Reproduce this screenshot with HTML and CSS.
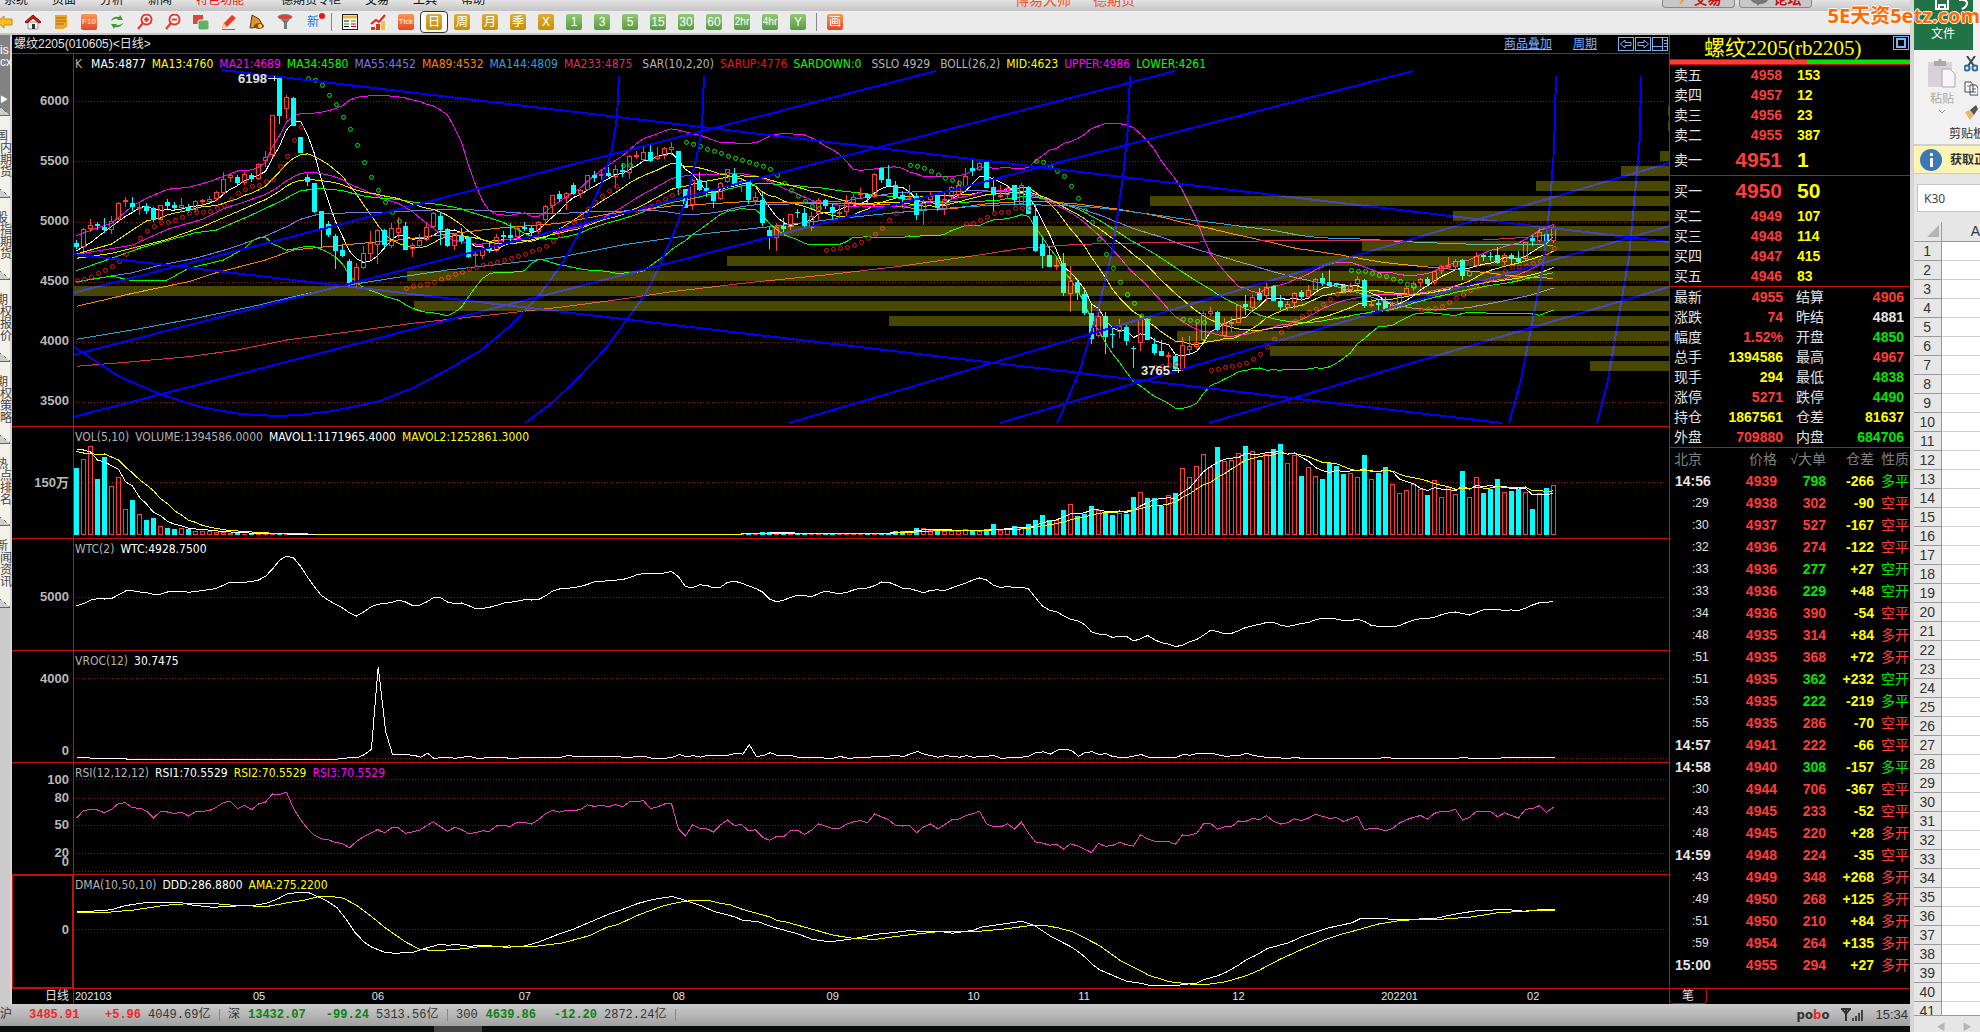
FILE: index.html
```html
<!DOCTYPE html>
<html lang="zh-CN">
<head>
<meta charset="utf-8">
<title>螺纹2205 日线</title>
<link rel="stylesheet" href="styles.css">
</head>
<body>
<div class="desktop">
<div class="terminal">
  <header class="menubar">
    <nav class="menu">
      <a href="#">系统</a><a href="#">页面</a><a href="#">分析</a><a href="#">新闻</a><a href="#" class="hot">特色功能</a><a href="#" class="wide">德期货专柜</a><a href="#">交易</a><a href="#">工具</a><a href="#">帮助</a>
    </nav>
    <div class="brand"><span>博易大师</span><span>德期货</span></div>
    <div class="capsules">
      <button><svg width="12" height="14" viewBox="0 0 12 14"><path d="M8 0 2 7h4L3 14l8-9H7l3-5z" fill="#f90"/></svg>交易</button>
      <button><svg width="18" height="14" viewBox="0 0 18 14"><path d="M0 3h18v5q-2 4-8 4l-3 2v-2Q2 11 0 7z" fill="#777"/></svg>论坛</button>
    </div>
  </header>
  <div class="toolbar">
    <button aria-label="后退"><svg viewBox="0 0 16 16"><path d="M0 8 7 2v3h8v6H7v3z" fill="#fdbb28" stroke="#c98a10"/></svg></button>
    <button aria-label="首页"><svg viewBox="0 0 16 16"><path d="M3 8h10v7H3z" fill="#eee" stroke="#999"/><path d="M7 10h3v5H7z" fill="#333"/><path d="M0 8 8 1l8 7-2 1-6-5-6 5z" fill="#d01818" stroke="#900"/></svg></button>
    <button aria-label="便笺"><svg viewBox="0 0 16 16"><path d="M2 1h12v12l-4 2H2z" fill="#eea52c"/><path d="M3 4h10M3 7h10M3 10h8" stroke="#a96a10"/></svg></button>
    <button class="chip orange" aria-label="F10"><span>F10</span></button>
    <button aria-label="刷新"><svg viewBox="0 0 16 16"><path d="M2 7q2-5 8-4l1-2 3 5H8l1-1Q6 4 2 7zM14 9q-2 5-8 4l-1 2-3-5h6l-1 1q3 1 7-2z" fill="#3d9e2c"/></svg></button>
    <button aria-label="放大"><svg viewBox="0 0 16 16"><circle cx="9.500" cy="5.500" r="5" fill="#fff" stroke="#e8352a" stroke-width="2"/><path d="M7 5.500h5M9.500 3v5M6 9l-5 6" stroke="#e8352a" stroke-width="2"/></svg></button>
    <button aria-label="缩小"><svg viewBox="0 0 16 16"><circle cx="9.500" cy="5.500" r="5" fill="#fff" stroke="#e8352a" stroke-width="2"/><path d="M7 5.500h5M6 9l-5 6" stroke="#e8352a" stroke-width="2"/></svg></button>
    <button aria-label="叠加"><svg viewBox="0 0 16 16"><rect x="0" y="1" width="10" height="9" fill="#d8463c"/><rect x="5" y="6" width="11" height="10" rx="2" fill="#62b060" stroke="#eee"/></svg></button>
    <button aria-label="画笔"><svg viewBox="0 0 16 16"><path d="M1 14 3 9 11 1l4 3-9 9z" fill="#e8402a"/><path d="m1 14 2-5 3 4z" fill="#fc8"/><path d="M1 15.500h13" stroke="#e8402a"/></svg></button>
    <button aria-label="预警"><svg viewBox="0 0 16 16"><path d="m3 1 7 4 3 5-1 3L1 14l1-6z" fill="#dc962e" stroke="#5d3512"/><ellipse cx="10" cy="12" rx="5" ry="3" fill="#8a4a12"/><circle cx="11" cy="12" r="2" fill="#fc5"/></svg></button>
    <button aria-label="筛选"><svg viewBox="0 0 16 16"><path d="m1 2 6 7v6h3V9l5-7z" fill="#777"/><ellipse cx="8" cy="3" rx="7" ry="2.500" fill="#e03a3a" stroke="#888"/></svg></button>
    <button class="newmark" aria-label="新"><span>新</span><svg viewBox="0 0 6 6"><circle cx="3" cy="3" r="3" fill="#f01010"/></svg></button>
    <i class="sep"></i>
    <button aria-label="报价表"><svg viewBox="0 0 16 16"><rect x=".5" y=".5" width="15" height="15" fill="#fff" stroke="#222"/><path d="M1 3h14" stroke="#e4b848" stroke-width="3"/><path d="M2 7h5M2 12.500h5" stroke="#111"/><path d="M2 10h5M9 7h5" stroke="#0a0"/><path d="M9 10h5M9 12.500h5" stroke="#d00"/></svg></button>
    <button aria-label="走势图"><svg viewBox="0 0 16 16"><path d="M1 13h4v3H1zM6 10h4v6H6z" fill="#e03020"/><path d="M11 7h4v9h-4z" fill="#f0c040"/><path d="m1 10 5-4 3 2 6-7" fill="none" stroke="#e02018" stroke-width="2"/></svg></button>
    <button class="chip red"><span>Tick</span></button>
    <button class="chip gold on"><span>日</span></button>
    <button class="chip gold"><span>周</span></button>
    <button class="chip gold"><span>月</span></button>
    <button class="chip gold"><span>季</span></button>
    <button class="chip gold"><span>X</span></button>
    <button class="chip green"><span>1</span></button>
    <button class="chip green"><span>3</span></button>
    <button class="chip green"><span>5</span></button>
    <button class="chip green"><span>15</span></button>
    <button class="chip green"><span>30</span></button>
    <button class="chip green"><span>60</span></button>
    <button class="chip green small"><span>2hr</span></button>
    <button class="chip green small"><span>4hr</span></button>
    <button class="chip green"><span>Y</span></button>
    <i class="sep"></i>
    <button class="chip red"><span>画</span></button>
  </div>
  <div class="work">
    <nav class="sidetabs">
      <a href="#" class="on">is<br>cx<b>▶</b></a>
      <a href="#">国内期货</a><a href="#">股指期货</a><a href="#">期权报价</a><a href="#">期权策略</a><a href="#">热点排名</a><a href="#">新闻资讯</a>
    </nav>
    <main class="chart">
      <div class="charthead">
        <h1>螺纹2205(010605)&lt;日线&gt;</h1>
        <a href="#" class="over">商品叠加</a><a href="#" class="cycle">周期</a>
        <button aria-label="上一个"><svg viewBox="0 0 16 14"><rect x=".5" y=".5" width="15" height="13"/><path d="M2.500 7 7 3v2.500h6v3H7V11z"/></svg></button>
        <button aria-label="下一个"><svg viewBox="0 0 16 14"><rect x=".5" y=".5" width="15" height="13"/><path d="M13.500 7 9 3v2.500H3v3h6V11z"/></svg></button>
        <button aria-label="布局"><svg viewBox="0 0 16 14"><rect x=".5" y=".5" width="15" height="13"/><path d="M10.500 1v12M1 9.500h9M12 3.500h3M12 6.500h3M12 9.500h3"/></svg></button>
      </div>
      <section class="pane">
        <div class="axis price"><span>6000</span><span>5500</span><span>5000</span><span>4500</span><span>4000</span><span>3500</span></div>
        <div class="plot">
          <svg id="kline" viewBox="74 54 1595 372" preserveAspectRatio="none"></svg>
          <p class="legend"><span class="dim k">K</span><span class="w">MA5:4877</span><span class="y">MA13:4760</span><span class="m">MA21:4689</span><span class="g">MA34:4580</span><span class="v">MA55:4452</span><span class="o">MA89:4532</span><span class="b">MA144:4809</span><span class="c">MA233:4875</span><span class="dim set">SAR(10,2,20)</span><span class="r">SARUP:4776</span><span class="g">SARDOWN:0</span><span class="dim set">SSLO 4929</span><span class="dim set">BOLL(26,2)</span><span class="y">MID:4623</span><span class="m">UPPER:4986</span><span class="g">LOWER:4261</span></p>
        </div>
      </section>
      <section class="pane">
        <div class="axis vol"><span>150万</span></div>
        <div class="plot">
          <svg id="volume" viewBox="74 427 1595 111" preserveAspectRatio="none"></svg>
          <p class="legend"><span class="dim">VOL(5,10)</span><span class="dim">VOLUME:1394586.0000</span><span class="w">MAVOL1:1171965.4000</span><span class="y">MAVOL2:1252861.3000</span></p>
        </div>
      </section>
      <section class="pane">
        <div class="axis wtc"><span>5000</span></div>
        <div class="plot">
          <svg id="wtc" viewBox="74 539 1595 111" preserveAspectRatio="none"></svg>
          <p class="legend"><span class="dim">WTC(2)</span><span class="w">WTC:4928.7500</span></p>
        </div>
      </section>
      <section class="pane">
        <div class="axis vroc"><span>4000</span><span>0</span></div>
        <div class="plot">
          <svg id="vroc" viewBox="74 651 1595 111" preserveAspectRatio="none"></svg>
          <p class="legend"><span class="dim">VROC(12)</span><span class="w">30.7475</span></p>
        </div>
      </section>
      <section class="pane">
        <div class="axis rsi"><span>100</span><span>80</span><span>50</span><span>20</span><span>0</span></div>
        <div class="plot">
          <svg id="rsi" viewBox="74 763 1595 111" preserveAspectRatio="none"></svg>
          <p class="legend"><span class="dim">RSI(12,12,12)</span><span class="w">RSI1:70.5529</span><span class="y">RSI2:70.5529</span><span class="m">RSI3:70.5529</span></p>
        </div>
      </section>
      <section class="pane">
        <div class="axis dma"><span>0</span></div>
        <div class="plot">
          <svg id="dma" viewBox="74 875 1595 113" preserveAspectRatio="none"></svg>
          <p class="legend"><span class="dim">DMA(10,50,10)</span><span class="w">DDD:286.8800</span><span class="y">AMA:275.2200</span></p>
        </div>
      </section>
      <div class="dates">
        <span class="period">日线</span>
        <div class="months"><span>202103</span><span>05</span><span>06</span><span>07</span><span>08</span><span>09</span><span>10</span><span>11</span><span>12</span><span>202201</span><span>02</span></div>
      </div>
    </main>
    <aside class="quote">
      <header class="quotehead"><h2>螺纹2205(rb2205)</h2><button aria-label="还原"><svg viewBox="0 0 16 14"><rect x=".5" y=".5" width="15" height="13"/><rect x="4" y="3" width="8" height="8" stroke-width="2"/></svg></button></header>
      <div class="ratio"><i class="bid"></i><i class="ask"></i></div>
      <table class="book">
        <tr><th>卖五</th><td>4958</td><td>153</td></tr>
        <tr><th>卖四</th><td>4957</td><td>12</td></tr>
        <tr><th>卖三</th><td>4956</td><td>23</td></tr>
        <tr><th>卖二</th><td>4955</td><td>387</td></tr>
        <tr class="best"><th>卖一</th><td>4951</td><td>1</td></tr>
      </table>
      <table class="book bids">
        <tr class="best"><th>买一</th><td>4950</td><td>50</td></tr>
        <tr><th>买二</th><td>4949</td><td>107</td></tr>
        <tr><th>买三</th><td>4948</td><td>114</td></tr>
        <tr><th>买四</th><td>4947</td><td>415</td></tr>
        <tr><th>买五</th><td>4946</td><td>83</td></tr>
      </table>
      <table class="stats">
        <tr><th>最新</th><td class="up">4955</td><th>结算</th><td class="up">4906</td></tr>
        <tr><th>涨跌</th><td class="up">74</td><th>昨结</th><td class="flat">4881</td></tr>
        <tr><th>幅度</th><td class="up">1.52%</td><th>开盘</th><td class="down">4850</td></tr>
        <tr><th>总手</th><td class="qty">1394586</td><th>最高</th><td class="up">4967</td></tr>
        <tr><th>现手</th><td class="qty">294</td><th>最低</th><td class="down">4838</td></tr>
        <tr><th>涨停</th><td class="up">5271</td><th>跌停</th><td class="down">4490</td></tr>
        <tr><th>持仓</th><td class="qty">1867561</td><th>仓差</th><td class="qty">81637</td></tr>
        <tr><th>外盘</th><td class="up">709880</td><th>内盘</th><td class="down">684706</td></tr>
      </table>
      <table class="ticks">
        <thead><tr><th>北京</th><th>价格</th><th>√大单</th><th>仓差</th><th>性质</th></tr></thead>
        <tbody id="ticks"></tbody>
      </table>
      <footer class="quotetabs"><button>笔</button></footer>
    </aside>
  </div>
  <footer class="status">
    <div class="index"><span class="nm">沪</span><b class="up px">3485.91</b><b class="up ch">+5.96</b><span>4049.69亿</span></div>
    <div class="index"><span class="nm">深</span><b class="down px">13432.07</b><b class="down ch">-99.24</b><span>5313.56亿</span></div>
    <div class="index"><span class="nm">300</span><b class="down px">4639.86</b><b class="down ch">-12.20</b><span>2872.24亿</span></div>
    <div class="tray"><b class="pobo">po<em>b</em>o</b><svg width="22" height="14" viewBox="0 0 22 14"><path d="M0 1h10M5 1v12M1 1l4 5 4-5" fill="none" stroke="#333" stroke-width="2"/><path d="M11 10h2v3h-2zM14 8h2v5h-2zM17 5h2v8h-2zM20 2h2v11h-2z" fill="#444"/></svg><time>15:34</time></div>
  </footer>
  <div class="taskbar"><i></i></div>
</div>
<div class="sheet">
  <div class="ribbonhead"><div class="file"><svg width="34" height="10" viewBox="0 0 34 10"><path d="M1 0v9h12V0M4 9V5h6v4M24 0q8-1 8 3t-5 6" fill="none" stroke="#fff" stroke-width="2"/></svg><button>文件</button></div></div>
  <div class="ribbon">
    <div class="paste"><svg width="28" height="30" viewBox="0 0 28 30"><path d="M0 4h24v25H0z" fill="#d6d2d8"/><path d="M6 8V3h4q2-5 4 0h4v5z" fill="#aaa"/><path d="M14 11h8l5 5v13H14z" fill="#f8f4fa" stroke="#aaa"/></svg><button>粘贴</button><svg width="6" height="4" viewBox="0 0 6 4"><path d="m0 0 3 3 3-3" fill="none" stroke="#999"/></svg></div>
    <div class="clips">
      <svg width="14" height="16" viewBox="0 0 14 16"><path d="m3 0 7 10M11 0 4 10" stroke="#444" stroke-width="2"/><circle cx="3" cy="12" r="2.500" fill="none" stroke="#2d6da8" stroke-width="2"/><circle cx="11" cy="12" r="2.500" fill="none" stroke="#2d6da8" stroke-width="2"/></svg>
      <svg width="14" height="15" viewBox="0 0 14 15"><path d="M1 1h6l2 3v7H1zM6 4h6l2 3v7H6z" fill="#fff" stroke="#444"/><path d="M8 8h4M8 11h4M3 5h2" stroke="#2d6da8"/></svg>
      <svg width="14" height="16" viewBox="0 0 14 16"><path d="m1 7 5-2 4 5-4 5z" fill="#e8b76a"/><path d="m6 5 6-5 2 4-4 6z" fill="#555"/></svg>
    </div>
    <span class="group">剪贴板</span>
  </div>
  <div class="notice"><svg width="22" height="22" viewBox="0 0 22 22"><circle cx="11" cy="11" r="11" fill="#3c78b4"/><path d="M10 4h3v3h-3zM10 9h3v9h-3z" fill="#fff"/></svg><b>获取正版</b></div>
  <div class="formula"><input aria-label="名称框" value="K30"></div>
  <table class="cells"><thead><tr><th><svg width="12" height="12" viewBox="0 0 12 12"><path d="M12 0v12H0z" fill="#b4b4b4"/></svg></th><th>A</th></tr></thead><tbody id="rows"></tbody></table>
  <div class="hscroll"><button>◀</button><button>▶</button></div>
</div>
<p class="site">5E天资5etz.com</p>
</div>
<script src="chart.js"></script>
</body>
</html>
```
FILE: styles.css
```css
* { box-sizing: border-box; }
body { margin: 0; background: #000; font: 12px/12px "Liberation Sans", "Noto Sans CJK SC", sans-serif; }
h1, h2, p { margin: 0; font-weight: normal; }
a { color: inherit; text-decoration: none; }
button { margin: 0; padding: 0; border: 0; background: none; color: inherit; font: inherit; }
table { border-collapse: collapse; border-spacing: 0; width: 100%; }
th, td { padding: 0; font-weight: normal; }
.desktop { display: grid; grid-template-columns: minmax(0, 1fr) 66px; grid-template-rows: minmax(0, 1fr); height: 100vh; overflow: hidden; position: relative; }
.terminal { display: flex; flex-direction: column; min-width: 0; border-right: 4px solid #d8d4d4; }

.menubar { display: flex; flex: none; height: 11px; overflow: hidden; background: linear-gradient(#e4e4e4, #c4c4c4); color: #111; white-space: nowrap; }
.menu { display: flex; gap: 24px; align-items: flex-end; padding: 0 0 5px 4px; width: 1015px; }
.menu .hot { color: #f01010; }
.menu .wide { margin-left: 13px; }
.brand { display: flex; flex: 1; gap: 22px; align-items: flex-end; padding-bottom: 4px; color: #f0501c; font-size: 14px; line-height: 14px; }
.capsules { display: flex; gap: 4px; padding-right: 98px; }
.capsules button { display: flex; align-items: flex-end; justify-content: center; gap: 6px; width: 73px; height: 8px; padding-bottom: 1px; border: 1px solid #888; border-top: 0; border-radius: 0 0 4px 4px; background: #c8c8c8; color: #c81414; font-weight: bold; font-size: 14px; line-height: 14px; }

.toolbar { display: flex; flex: none; height: 24px; background: #ebebeb; border-bottom: 2px solid #c6c6c6; overflow: hidden; }
.toolbar button { display: flex; flex: none; align-items: center; justify-content: center; width: 28px; height: 22px; }
.toolbar button:first-child { margin-left: -9px; }
.toolbar button > svg { width: 16px; height: 16px; }
.toolbar .sep { width: 9px; flex: none; margin: 2px 0; background: linear-gradient(#888, #888) center / 1px 100% no-repeat; }
.chip span { display: block; width: 16px; height: 16px; border-radius: 2px; color: #fff; font: 12px/16px "Liberation Sans", "Noto Sans CJK SC", sans-serif; text-align: center; overflow: hidden; white-space: nowrap; }
.chip.gold span { background: linear-gradient(#dcae38, #c68e04); }
.chip.green span { background: linear-gradient(#92c878, #579a43); }
.chip.small span { font-size: 10px; }
.chip.red span, .chip.orange span { background: linear-gradient(#f8994a, #e8452a); font-size: 8px; }
.chip.red:last-child span { font-size: 12px; }
.chip.on { border: 1px solid #333; border-radius: 4px; background: #fff; }
.newmark { color: #1e78dc; font-size: 12px; position: relative; }
.toolbar .newmark > svg { position: absolute; right: 2px; top: 2px; width: 6px; height: 6px; }

.work { display: flex; flex: 1; min-height: 0; }
.sidetabs { display: flex; flex-direction: column; width: 12px; flex: none; overflow: hidden; background: linear-gradient(90deg, #ccc 10px, #d8d4d4 10px); }
.sidetabs a { width: 10px; height: 82px; flex: none; padding: 14px 0 0; border-bottom: 1px solid #666; background: linear-gradient(to top right, #ccc 49%, #666 49%, #666 51%, transparent 52%) bottom / 10px 8px no-repeat, #f2f1ea; color: #444; font-size: 12px; line-height: 12px; word-break: break-all; text-indent: -4px; }
.sidetabs .on { background-color: #828282; color: #fff; height: 81px; padding-top: 9px; word-break: normal; text-indent: 0; }
.sidetabs b { display: block; margin-top: 26px; font-size: 8px; }

.chart { display: grid; flex: 1; min-width: 0; grid-template-rows: 19px minmax(0, 373fr) repeat(4, minmax(0, 112fr)) minmax(0, 114fr) 15px; background: #000; color: #fff; }
.charthead { display: flex; align-items: center; border-bottom: 1px solid #c4120a; }
.charthead h1 { flex: 1; font-size: 12px; color: #e4e4e4; padding-left: 2px; }
.charthead a { color: #7fb2f8; text-decoration: underline; margin-right: 21px; }
.charthead button, .quotehead button { width: 16px; height: 14px; margin-right: 1px; }
.charthead svg, .quotehead svg { display: block; fill: none; stroke: #7fb2f8; width: 16px; height: 14px; }
.pane { display: grid; grid-template-columns: 62px minmax(0, 1fr); border-bottom: 1px solid #c4120a; min-height: 0; }
.plot { display: grid; min-height: 0; min-width: 0; }
.plot > * { grid-area: 1 / 1; }
.plot svg { width: 100%; height: 100%; min-height: 0; display: block; shape-rendering: crispEdges; fill: none; }
.plot svg text { fill: #e4e4e4; font: bold 13px "Liberation Sans", sans-serif; }
.grid { stroke: #9c0c08; stroke-dasharray: 1 2; }
.legend { display: flex; gap: 6px; align-self: start; padding: 3px 0 0 1px; font: 12px/14px "DejaVu Sans Condensed", "Noto Sans", sans-serif; white-space: nowrap; }
.legend .k { margin-right: 3px; }
.legend .set { margin-left: 4px; }
.dim { color: #b4b4b4; } .w { color: #fff; } .y { color: #ff0; } .m { color: #f0f; } .g { color: #0f0; }
.v { color: #7878f0; } .o { color: #ff8000; } .b { color: #30a0d8; } .c { color: #dc3050; } .r { color: #f01010; }
.axis { display: flex; flex-direction: column; border-right: 1px solid #c4120a; padding-right: 4px; text-align: right; color: #b8b8b8; font: bold 13px/16px "Liberation Sans", "Noto Sans CJK SC", sans-serif; min-height: 0; overflow: hidden; }
.axis.price { padding-top: 17px; line-height: 60px; }
.axis.vol { padding-top: 48px; }
.axis.wtc { padding-top: 50px; }
.axis.vroc { padding-top: 20px; gap: 56px; }
.axis.rsi { padding-top: 9px; gap: 2px; }
.axis.rsi span:nth-child(3) { margin-top: 9px; }
.axis.rsi span:nth-child(4) { margin-top: 10px; }
.axis.rsi span:nth-child(5) { margin-top: -9px; }
.axis.dma { padding-top: 46px; padding-right: 3px; border: 1px solid #c4120a; border-right-width: 2px; }
.dates { display: grid; grid-template-columns: 62px minmax(0, 1fr); line-height: 15px; color: #e4e4e4; }
.period { text-align: right; padding-right: 4px; border-right: 1px solid #c4120a; }
.months { display: grid; grid-template-columns: 178fr 119fr 147fr 154fr 154fr 141fr 111fr 154fr 149fr 146fr 142fr; padding-left: 1px; font-size: 11px; }

.quote { display: flex; flex-direction: column; flex: none; width: 241px; border-left: 1px solid #c4120a; background: #000; color: #e4e4e4; font-size: 14px; }
.quotehead { display: flex; align-items: flex-start; height: 25px; padding: 1px 0 0 34px; border-bottom: 1px solid #c4120a; }
.quotehead h2 { flex: 1; font: 21px/24px "Liberation Serif", "Noto Sans CJK SC", serif; color: #ff0; white-space: nowrap; }
.ratio { display: flex; height: 5px; border-bottom: 1px solid #c4120a; }
.ratio .bid { flex: 137; background: #ff3c38; }
.ratio .ask { flex: 103; background: #00e600; }
.quote th { text-align: left; line-height: 20px; }
.quote td { font-weight: bold; line-height: 20px; }
.book th, .stats th { padding-left: 4px; }
.book { table-layout: fixed; border-bottom: 1px solid #c4120a; }
.book td:nth-child(2), .up { color: #ff3c38; }
.book th, .book td:nth-child(2) { width: 56px; }
.book td:nth-child(2) { text-align: right; }
.book td:nth-child(3) { color: #ff0; padding-left: 15px; }
.book .best td { font-size: 21px; line-height: 30px; }
.stats { table-layout: fixed; border-bottom: 1px solid #c4120a; }
.stats td { text-align: right; }
.stats th { width: 44px; }
.stats th:nth-child(3) { padding-left: 13px; width: 48px; }
.stats td:nth-child(4) { padding-right: 6px; }
.stats td:nth-child(2) { width: 69px; }
.down { color: #00e600; } .qty { color: #ff0; } .flat { color: #e4e4e4; }
.ticks { table-layout: fixed; }
.ticks th { text-align: right; color: #808080; height: 22px; }
.ticks td { text-align: right; line-height: 22px; }
.ticks th:nth-child(1) { width: 46px; text-align: left; padding-left: 4px; }
.ticks th:nth-child(2) { width: 61px; }
.ticks th:nth-child(3) { width: 49px; }
.ticks th:nth-child(4) { width: 48px; }
.ticks td:first-child { text-align: left; padding-left: 5px; }
.ticks .sec { display: block; padding-left: 17px; font-size: 12px; font-weight: normal; }
.ticks td:last-child { font-weight: normal; }
.ticks th:last-child, .ticks td:last-child { padding-right: 1px; white-space: nowrap; }
.quotetabs { margin-top: auto; height: 16px; border-top: 1px solid #c4120a; }
.quotetabs button { width: 37px; height: 15px; margin-top: -1px; background: #000; border: 1px solid #c4120a; border-top: 0; border-left: 0; border-radius: 0 0 4px 4px; font-size: 12px; line-height: 14px; }

.status { display: flex; flex: none; height: 22px; align-items: center; background: linear-gradient(#ccc, #a0a0a0); color: #333; font: 12px/14px "Liberation Mono", "Noto Sans CJK SC", monospace; }
.index { display: flex; width: 228px; height: 12px; line-height: 12px; border-right: 1px solid #888; white-space: nowrap; }
.index .nm { padding: 0 8px; }
.index .ch { flex: 1; text-align: right; }
.index span:last-child { width: 78px; padding-left: 7px; }
.index:first-child { width: 220px; }
.index:first-child .nm { padding: 0 17px 0 0; }
.status .up { color: #f02828; } .status .down { color: #0a8214; }
.tray { display: flex; align-items: center; gap: 12px; margin-left: auto; padding-right: 2px; font: 13px/16px "Liberation Sans", sans-serif; }
.pobo { font: bold 13px/16px "DejaVu Sans Condensed", sans-serif; }
.pobo em { color: #f02828; font-style: normal; }
.taskbar { flex: none; height: 6px; background: #0c0e0d; padding-left: 434px; }
.taskbar i { display: block; width: 48px; height: 6px; background: #444; }

.sheet { display: flex; flex-direction: column; min-width: 0; overflow: hidden; position: relative; background: #e6e6e6; color: #333; }
.ribbonhead { height: 50px; flex: none; background: #f1f1f1; }
.file { width: 59px; height: 50px; background: #217346; color: #fff; padding-left: 17px; overflow: hidden; }
.file svg { display: block; margin: 0 0 18px 4px; }
.ribbon { display: grid; grid-template-columns: 36px 1fr; grid-template-rows: 76px 18px; flex: none; height: 96px; padding-left: 14px; background: #f1f1f1; border-bottom: 2px solid #d0d0d0; }
.paste { display: flex; flex-direction: column; align-items: center; gap: 5px; padding: 8px 8px 0 0; color: #aaa; white-space: nowrap; }
.clips { display: flex; flex-direction: column; gap: 9px; padding-top: 6px; }
.group { grid-column: 1 / 3; justify-self: end; margin-right: -5px; white-space: nowrap; line-height: 16px; padding-left: 20px; }
.notice { display: flex; align-items: center; gap: 8px; flex: none; height: 28px; padding-left: 6px; background: #fbf4b4; border-bottom: 1px solid #d8d090; white-space: nowrap; }
.notice svg { flex: none; }
.formula { flex: none; height: 48px; padding: 10px 0 0 3px; }
.formula input { width: 100%; height: 28px; border: 1px solid #c4c4c4; border-right: 0; padding: 0 6px; background: #fff; color: #444; font: 12px "Noto Sans", sans-serif; }
.cells { table-layout: fixed; flex: none; }
.cells th { width: 27px; height: 19px; border-right: 1px solid #999; border-bottom: 1px solid #999; background: #e6e6e6; font: 14px/18px "Liberation Sans", sans-serif; color: #333; text-align: center; }
.cells thead th { text-align: right; }
.cells thead th:last-child { border-right: 0; padding: 0; }
.cells thead th svg { display: block; margin: 0 2px 0 auto; }
.cells th:last-child { width: auto; }
.cells td { background: #fff; border-bottom: 1px solid #d0d0d0; }
.hscroll { display: flex; align-items: flex-end; justify-content: space-around; position: absolute; left: 0; right: 0; bottom: 0; height: 17px; padding-left: 14px; border-top: 1px solid #999; background: #e6e6e6; color: #b4b4b4; font-size: 9px; line-height: 10px; }
.site { position: absolute; top: 2px; right: 0; color: #ff6a00; font: bold 20px/28px "Noto Sans", "Noto Sans CJK SC", sans-serif; text-shadow: 1px 0 #fff, -1px 0 #fff, 0 1px #fff, 0 -1px #fff; }
```
FILE: chart.js
```js
// Chart geometry: one bar every 7 units, the first bar centred on 76.5.
const X = i => 76.5 + 7 * i;
const $ = id => document.getElementById(id);
const add = (id, html) => $(id).insertAdjacentHTML('beforeend', html);
const poly = (id, pts, color, width = 1, extra = '') =>
  add(id, `<polyline points="${pts.map(p => p.map(n => Math.round(n * 10) / 10).join()).join(' ')}" stroke="${color}" stroke-width="${width}" ${extra}/>`);
const grids = (id, ys) => ys.forEach(y => add(id, `<path class="grid" d="M76 ${y}.5H1669"/>`));

// Each bar: colour, high, body top, body bottom, low, in thirds of a unit below the block's base.
const bars = [];
const load = (base, text) => text.trim().split(/\s*;\s*/).forEach(row => {
  const [c, ...v] = row.trim().split(' ');
  const [h, t, b, l] = v.map(n => base + n / 3);
  bars.push({ up: c === 'r', h, t, b, l, close: c === 'r' ? t : b });
});
load(30, `c 630 639 651 657;r 594 598 652 664;r 568 586 597 605;c 576 582 589 600;c 564 590 600 608;r 559 574 599 611;r 516 520 566 571;r 501 511 517 530;c 501 520 531 542;r 516 532 534 554;c 520 528 543 552;c 532 534 570 577;r 525 526 569 571;c 507 516 528 537;c 517 525 534 540;r 504 526 535 545;c 522 532 540 550;r 510 514 540 545;r 507 511 514 529;r 498 506 516 520;r 483 485 507 512;r 426 448 490 494;r 430 436 445 456;c 436 441 459 465;r 427 433 460 466;c 430 435 448 456;r 400 401 448 450;r 363 381 394 410;r 255 256 376 382;c 140 144 258 282;r 196 202 238 266;c 201 204 287 289;c 320 321 368 370;c 432 441 455 468;c 458 459 545 549;c 543 544 597 653;c 574 582 614 620;c 613 618 662 716;c 645 660 678 682;c 688 693 765 768;r 700 712 762 776;r 648 670 715 718;r 603 640 673 690;r 598 601 646 702;c 597 600 644 650;r 580 595 648 655;r 560 594 608 625;c 576 588 660 660;r 640 646 657 680;r 612 630 649 655;r 583 591 631 633;r 545 550 592 595;c 547 558 599 644;c 594 597 648 650;r 608 612 647 660;c 595 615 633 642;c 618 622 681 683;r 664 672 675 711;r 645 658 679 687;c 640 654 664 669;r 613 622 664 667`);
load(60, `c 514 525 531 545;c 490 525 534 545;r 500 505 530 535;c 487 500 506 513;c 497 504 516 529;r 483 487 515 530;r 436 439 479 486;r 404 406 439 459;c 393 402 416 427;r 396 400 413 450;c 369 375 401 405;r 387 391 402 414;r 345 346 390 394;c 333 346 353 366;r 334 342 345 375;c 321 338 347 350;r 315 328 352 385;c 308 330 336 350;r 285 289 338 356;r 273 286 290 298;r 261 277 300 306;c 252 277 304 306;r 260 289 296 300;r 262 265 288 297;r 245 262 269 285;c 273 274 382 405;c 386 388 443 445;r 358 360 436 450;c 335 360 390 392;c 366 384 394 412;c 387 394 424 443;r 366 370 418 420;r 327 328 367 369;c 324 342 372 375;r 357 363 369 396;c 360 363 420 432;r 396 412 424 432;c 400 420 489 498;c 502 510 528 567;r 490 502 535 573;c 474 497 507 521;r 461 463 501 509;c 447 456 460 474;c 444 459 498 501;r 456 469 503 513;r 414 420 463 480;c 417 419 438 447;c 432 441 458 477;r 435 457 461 475;r 405 427 457 469;r 402 411 430 440;r 384 400 406 416;c 399 402 414 430;r 339 343 411 414;c 323 324 360 369;c 316 357 377 378;c 363 375 413 416;c 393 406 418 444;r 375 414 417 420;c 399 408 465 480;r 420 430 450 495;r 396 409 419 423;c 405 407 443 453;r 396 417 449 465;r 378 382 411 420;r 360 376 405 411;r 324 349 380 385;c 300 324 333 348;r 305 310 331 334;c 300 303 383 385;c 352 381 404 455;r 375 405 406 414;r 378 385 406 418;c 374 375 420 436;r 368 374 431 435;c 378 382 461 462;c 435 468 572 575;c 534 552 588 624;c 558 585 621 622;r 594 615 622 630;c 579 610 699 708;r 617 664 703 756;c 657 665 699 720;c 688 702 759 765;c 735 758 838 852;r 750 769 829 831;c 756 768 830 882;c 804 822 824 865;r 777 799 815 834;c 796 800 843 854;c 858 864 866 924;r 772 776 850 873;c 770 776 839 841;c 835 852 879 885;c 840 873 888 889;r 876 886 890 920;c 886 888 927 930;r 832 856 929 932;r 827 858 869 882;r 786 845 861 868;r 754 760 841 845;r 742 754 762 769;c 753 756 811 813;r 774 789 827 830;r 772 787 789 817;r 735 736 789 790;c 704 732 740 766;r 704 710 744 750;c 684 698 720 724;r 669 680 709 724;c 675 678 722 724;c 704 723 741 750;r 722 731 745 754;r 696 698 730 746;c 690 697 711 716;r 676 689 710 715;r 654 656 689 691;c 640 654 668 678;c 630 666 679 681;c 668 670 674 682;c 671 675 695 700;r 668 676 689 700;r 647 658 672 690;c 658 661 739 744;r 718 731 733 742;c 716 730 735 750;c 712 723 747 750;r 726 736 748 750;r 703 704 740 744;r 682 684 704 706;r 664 668 683 692;r 654 656 668 681;c 652 657 672 678;r 630 633 669 675;r 614 618 634 642;r 592 618 620 626;r 598 604 620 628;c 598 601 648 660;r 620 632 649 652;r 576 589 619 622;c 582 586 590 602;c 576 588 590 602;c 561 585 609 611;r 580 586 607 615;c 579 586 596 612;c 573 594 606 610;r 546 547 597 600;c 528 534 542 558;r 504 517 544 546;c 508 522 542 545;r 495 502 543 548`);
const close = bars.map(b => b.close);

// Moving average; bars before the window fills follow the given [bar, y] knots.
const window_ = (a, i, n) => a.slice(i - n + 1, i + 1);
const mean = a => a.reduce((s, v) => s + v, 0) / a.length;
const average = (src, n, knots) => {
  const out = knots.map(([i, y]) => [X(i), y]);
  for (let i = n - 1; i < src.length; i++) out.push([X(i), mean(window_(src, i, n))]);
  return out;
};
const knots = (...k) => { const o = []; for (let i = 0; i < k.length; i += 2) o.push([k[i], 30 + k[i + 1] / 3]); return o; };

grids('kline', [101, 161, 222, 282, 342, 402]);

// Moving averages and Bollinger bands
poly('kline', average(close, 5, knots(0, 662, 1, 650, 2, 638, 3, 622)), '#fff');
poly('kline', average(close, 13, knots(0, 672, 5, 642, 8, 600, 10, 573)), '#e8e800');
poly('kline', average(close, 21, knots(0, 673, 3, 663, 8, 645, 13, 598, 18, 568)), '#f0f');
poly('kline', average(close, 34, knots(0, 722, 9, 655, 17, 608, 20, 600, 25, 555, 29, 515, 32, 482)), '#0f0');
poly('kline', average(close, 55, knots(0, 755, 8, 728, 12, 705, 17, 685, 22, 655, 27, 618, 30, 590, 32, 568, 35, 550, 42, 548, 51, 540)), '#7878f0');
poly('kline', average(close, 89, knots(0, 829, 8, 790, 16, 755, 20, 728, 27, 690, 31, 660, 38, 645, 46, 630, 52, 615, 60, 595, 69, 580, 76, 552, 85, 528)), '#ff8000');
poly('kline', average(close, 144, knots(0, 928, 8, 900, 17, 865, 25, 830, 31, 800, 38, 768, 45, 745, 53, 720, 60, 704, 69, 682, 78, 645, 88, 615, 99, 590, 108, 568, 117, 548, 127, 530, 134, 523)), '#30a0d8');
poly('kline', knots(0, 1009, 8, 995, 16, 980, 23, 960, 30, 930, 38, 908, 48, 880, 60, 853, 69, 832, 77, 810, 85, 785, 96, 758, 107, 735, 118, 708, 129, 675, 135, 655, 143, 643, 152, 639, 169, 633, 191, 630, 201, 630, 207, 622, 211, 614).map(([i, y]) => [X(i), y]), '#dc3050');
const band = side => {
  const pre = side < 0
    ? knots(0, 617, 3, 593, 5, 580, 7, 545, 8, 528, 10, 505, 13, 478, 16, 472, 19, 455, 23, 423)
    : knots(0, 756, 5, 738, 8, 752, 13, 750, 16, 715, 21, 690, 24, 655);
  const out = pre.map(([i, y]) => [X(i), y]);
  for (let i = 25; i < close.length; i++) {
    const w = window_(close, i, 26), m = mean(w);
    out.push([X(i), m + side * 2 * Math.sqrt(mean(w.map(v => (v - m) ** 2)))]);
  }
  return out;
};
poly('kline', average(close, 26, knots(0, 685, 5, 670, 13, 628, 18, 590)), '#e8e800');
poly('kline', band(-1), '#f0f');
poly('kline', band(1), '#0f0');

// Candles
bars.forEach((b, i) => {
  const x = X(i);
  const top = Math.round(b.t), h = Math.max(1, Math.round(b.b) - top);
  add('kline', b.up
    ? `<path d="M${x} ${b.h}V${top}M${x} ${top + h}V${b.l}" stroke="#ff3c38"/><rect x="${x - 2}" y="${top + .5}" width="4" height="${Math.max(1, h - 1)}" stroke="#ff3c38"/>`
    : `<path d="M${x} ${b.h}V${b.l}" stroke="#0ff"/><rect x="${x - 2.5}" y="${top}" width="5" height="${h}" fill="#0ff"/>`);
});

// Parabolic SAR dots: first bar, base, colour, values
const sar = (start, base, color, text) => text.split(' ').forEach((v, k) =>
  add('kline', `<circle cx="${X(start + k) + 1}" cy="${base + v / 3}" r="2" stroke="${color}" shape-rendering="auto"/>`));
const R = '#f01414', G = '#00f000';
sar(0, 30, R, '752 748 741 730 721 710 695 673 650 625 604 590 578 577 571 562 550 547 547 545 535 527 509 490 479 469 466 455 449 409 379 331 292');
sar(33, 30, G, '146 151 166 196 224 262 298 346 398 442 481 517 547 574');
sar(47, 30, R, '775 769 766 763 757 748 742 733 727 718 712');
sar(58, 60, R, '615 612 607 601 595 589 583 574 568 559 544 526 504 489 466 448 427 409 393 379');
sar(78, 60, G, '317 316');
sar(80, 60, R, '453 445 439 427 418 406 394');
sar(87, 60, G, '247 253 259 268 274 280 289 295 301 307 313 319 328 346 370 391 409 424 439 445');
sar(107, 60, R, '571 568 565 562 556 547 535 523 505 481 460 439');
sar(119, 60, G, '316 319 325 334 345 355 361 370');
sar(127, 60, R, '492 490 481 472 460 457 457 445 445 445');
sar(137, 60, G, '304 307 321 334 349 379 415 452 487 538 583 625 667 704 730 768 778');
sar(154, 60, R, '922 919 916 913');
sar(158, 60, G, '778 781 784 787');
sar(162, 60, R, '931 928 922 919 915 910 898 883 862 838 817 799 784 769 757 748 734 718 703 690');
sar(182, 60, G, '631 634 634 640 646 650 658 664 673 679');
sar(192, 60, R, '751 748 746 740 727 715 704 691 682 670 658 646 634 622 621 618 610 603 580 565');

// Drawn trend lines and arcs
[[222, 70, 1669, 242], [73, 254, 1502, 423], [73, 293, 936, 71], [73, 355, 1175, 71], [73, 417, 1413, 71],
 [789, 423, 1669, 163], [1000, 423, 1669, 226], [1209, 423, 1669, 287]]
  .forEach(([a, b, c, d]) => poly('kline', [[a, b], [c, d]], '#00f', 2));
const arc = text => poly('kline', text.split(' ').map(p => p.split(',').map(Number)), '#00f', 2);
arc('73,346 83,353 120,377 160,394 200,407 240,414 277,416 300,415 333,411 380,401 413,388 447,370 480,351 509,327 537,298 562,264 583,226 602,182 612,150 617,117 619,76');
arc('525,423 553,402 576,380 606,348 628,318 645,295 659,267 673,235 687,197 696,160 702,127 704,76');
arc('1057,423 1060,417 1080,370 1098,310 1113,247 1123,177 1128,127 1130,76');
arc('1509,423 1521,380 1532,323 1542,273 1550,203 1554,150 1556,76');
arc('1597,423 1608,380 1617,327 1629,257 1635,193 1640,137 1641,76');

// Volume profile, top down
[[106, 1668], [121, 1668], [151, 1660], [166, 1621], [181, 1536], [196, 1150], [211, 1453], [226, 772], [241, 1362], [256, 727],
 [271, 407], [286, 74], [301, 414], [316, 889], [331, 1177], [346, 1270], [361, 1590]]
  .forEach(([y, x]) => add('kline', `<rect x="${x}" y="${y}" width="${1669 - x}" height="10" fill="#ff0" fill-opacity=".28"/>`));
add('kline', `<text x="238" y="83">6198</text><path d="M268 78.500h9M274 76v5" stroke="#ddd"/>
<text x="1141" y="375">3765</text><path d="M1172 370.500h9M1178 368v5" stroke="#ddd"/>`);

// Volume
const vol = '125 103 69 154 97 173 150 233 209 246 261 256 278 282 285 283 285 289 291 291 293 293 295 296 297 297'.split(' ').map(Number);
while (vol.length < 96) vol.push(298);
vol.push(295, 297, 293, 293);
while (vol.length < 115) vol.push(296);
vol.push(...'296 294 290 290 290 282 283 287 287 289 291 291 286 291 291 286 272 287 285 277 283 272 261 248 261 262 235 220 250 245 225 234 240 248 242 245 201 187 204 204 226 197 191 126 150 119 90 124 71 108 105 85 68 82 105 88 76 63 113 91 146 124 147 154 113 120 141 138 150 91 153 139 123 166 192 184 168 181 196 156 202 175 194 133 202 150 191 179 154 189 186 179 189 233 192 178 171'.split(' ').map(Number));
const volY = vol.slice(0, 212).map(v => 420 + v / 2.613);
grids('volume', [482]);
volY.forEach((y, i) => {
  const t = Math.round(y), h = Math.max(1, 535 - t), up = bars[i].up;
  add('volume', up && h > 1
    ? `<rect x="${X(i) - 2}" y="${t + .5}" width="4" height="${h - 1}" stroke="#ff3c38"/>`
    : `<rect x="${X(i) - 2.5}" y="${t}" width="5" height="${h}" fill="${up ? '#ff3c38' : '#0ff'}"/>`);
});
poly('volume', average(volY, 5, [[0, 449], [1, 450], [2, 452], [3, 460]]), '#fff');
poly('volume', average(volY, 10, [[0, 451.5], [1, 453], [2, 453], [3, 455], [4, 454], [5, 457], [6, 460], [7, 467], [8, 473]]), '#ff0');

// Weighted close (H + L + 2C) / 4, smoothed over two bars
grids('wtc', [597]);
const weighted = bars.map(b => 597.3 + ((b.h + b.l + 2 * b.close) / 4 - 222) * .353);
poly('wtc', average(weighted, 2, [[0, weighted[0]]]), '#fff');

// Relative strength, Wilder smoothing
grids('rsi', [779, 798, 825, 853, 871]);
let gain = 4, loss = 2.9;
const strength = [[X(0), 818]];
for (let i = 1; i < close.length; i++) {
  const d = close[i - 1] - close[i];
  gain = (gain * 11 + Math.max(d, 0)) / 12;
  loss = (loss * 11 + Math.max(-d, 0)) / 12;
  strength.push([X(i), 871.3 - .92 * 100 * gain / (gain + loss)]);
}
poly('rsi', strength, '#f03cc0', 1);

// Digitised series; each block carries its own x origin, x scale, y origin and y scale.
const block = (x0, sx, y0, sy, text) => text.split(' ').map(p => { const [x, y] = p.split(','); return [x0 + x / sx, y0 + y / sy]; });
grids('vroc', [678, 758]);
poly('vroc', [
  ...block(0, 2.8, 420, 3, '217,1014 235,1012 260,1015 340,1015 360,1018 940,1018 980,1013 1002,1012 1020,1004 1040,988 1059,740 1080,935 1099,1003 1120,1003 1160,1006 1178,1012 1197,1000 1215,1015 1255,1012 1275,1015 1313,1009 1335,1015 1400,1012 1430,1015 1510,1012'),
  ...block(540, 2.8, 420, 2.613, '0,882 60,881 77,877 115,880 215,879 235,882 293,879 313,884 350,884 372,881 390,874 410,880 430,877 450,881 470,876 528,876 548,871 568,873 586,848 606,879 626,877 645,869 665,877 705,877 723,881 820,884 840,879 862,884 1000,877 1018,879 1057,866 1075,873 1115,881 1135,877 1175,881 1195,877 1213,881 1272,877 1290,884 1350,881 1370,878 1388,869 1410,867 1430,873 1450,862 1470,861 1488,863 1508,879'),
  ...block(1080, 2.613, 420, 2.613, '12,869 32,867 50,874 68,872 87,880 123,882 160,874 180,882 252,881 270,874 288,876 307,871 345,871 380,879 418,876 435,871 455,877 490,882 545,884 562,882 580,884 780,884 800,882 820,884 985,884 1002,882 1020,884 1240,882')], '#fff');

grids('dma', [929]);
poly('dma', [
  ...block(0, 2.24, 740, 3, '173,516 237,511 255,507 280,497 330,487 405,487 425,494 475,502 530,498 570,496 597,490 625,475 645,460 690,457 715,472 735,485 755,503 775,537 795,577 815,605 832,621 862,637 885,640 925,637 945,628 985,613 1005,616 1020,613 1050,619 1085,616 1135,622 1175,618 1205,607 1260,578 1280,570 1370,519 1395,508 1430,490 1465,478'),
  ...block(540, 2.8, 420, 2.613, '370,1245 410,1256 450,1269 487,1284 548,1299 568,1308 608,1310 645,1323 723,1343 762,1357 800,1362 825,1362 880,1355 940,1344 1000,1338 1035,1334 1075,1337 1115,1336 1155,1341 1215,1333 1235,1325 1290,1318 1350,1310 1385,1321 1430,1349 1490,1378'),
  ...block(1080, 2.613, 420, 2.613, '0,1393 15,1405 32,1422 50,1436 85,1451 123,1467 160,1472 180,1477 255,1477 305,1471 325,1462 360,1452 380,1444 415,1424 435,1410 455,1401 490,1381 545,1366 580,1350 650,1327 710,1314 730,1304 780,1302 835,1306 930,1302 985,1290 1040,1282 1115,1279 1165,1284 1205,1279 1240,1279')], '#fff');
poly('dma', [
  ...block(0, 2.24, 740, 3, '173,517 240,517 300,510 370,496 430,490 475,490 530,497 600,499 645,488 680,481 710,471 740,469 770,475 800,497 830,527 860,560 880,580 910,607 940,628 965,631 990,631 1040,626 1080,619 1140,618 1200,619 1260,609 1320,587 1360,562 1385,553 1430,525 1480,500'),
  ...block(540, 2.8, 420, 2.613, '370,1264 410,1257 440,1255 470,1255 505,1263 530,1266 568,1279 645,1299 665,1308 690,1312 760,1330 820,1346 880,1355 940,1357 1000,1349 1055,1343 1115,1337 1230,1336 1310,1329 1365,1322 1410,1320 1450,1327 1490,1337'),
  ...block(1080, 2.613, 420, 2.613, '0,1347 50,1373 105,1412 160,1440 180,1451 235,1468 290,1474 330,1475 380,1468 435,1452 470,1437 525,1408 590,1379 635,1360 675,1346 730,1331 780,1317 835,1308 900,1304 950,1304 1020,1299 1090,1288 1165,1283 1240,1281')], '#ff0');

// Trade list: time, price, lots, open-interest change, kind, colour of lots and kind
`14:56 4939 798 -266 多平 g
:29 4938 302 -90 空平 r
:30 4937 527 -167 空平 r
:32 4936 274 -122 空平 r
:33 4936 277 +27 空开 g
:33 4936 229 +48 空开 g
:34 4936 390 -54 空平 r
:48 4935 314 +84 多开 r
:51 4935 368 +72 多开 r
:51 4935 362 +232 空开 g
:53 4935 222 -219 多平 g
:55 4935 286 -70 空平 r
14:57 4941 222 -66 空平 r
14:58 4940 308 -157 多平 g
:30 4944 706 -367 空平 r
:43 4945 233 -52 空平 r
:48 4945 220 +28 多开 r
14:59 4948 224 -35 空平 r
:43 4949 348 +268 多开 r
:49 4950 268 +125 多开 r
:51 4950 210 +84 多开 r
:59 4954 264 +135 多开 r
15:00 4955 294 +27 多开 r`.split('\n').forEach(line => {
  const [t, p, n, d, k, c] = line.split(' ');
  const cls = c === 'g' ? 'down' : 'up';
  add('ticks', `<tr><td>${t[0] === ':' ? `<span class="sec">${t}</span>` : t}</td><td class="up">${p}</td><td class="${cls}">${n}</td><td class="qty">${d}</td><td class="${cls}">${k}</td></tr>`);
});

for (let n = 1; n <= 41; n++) add('rows', `<tr><th>${n}</th><td></td></tr>`);
```
